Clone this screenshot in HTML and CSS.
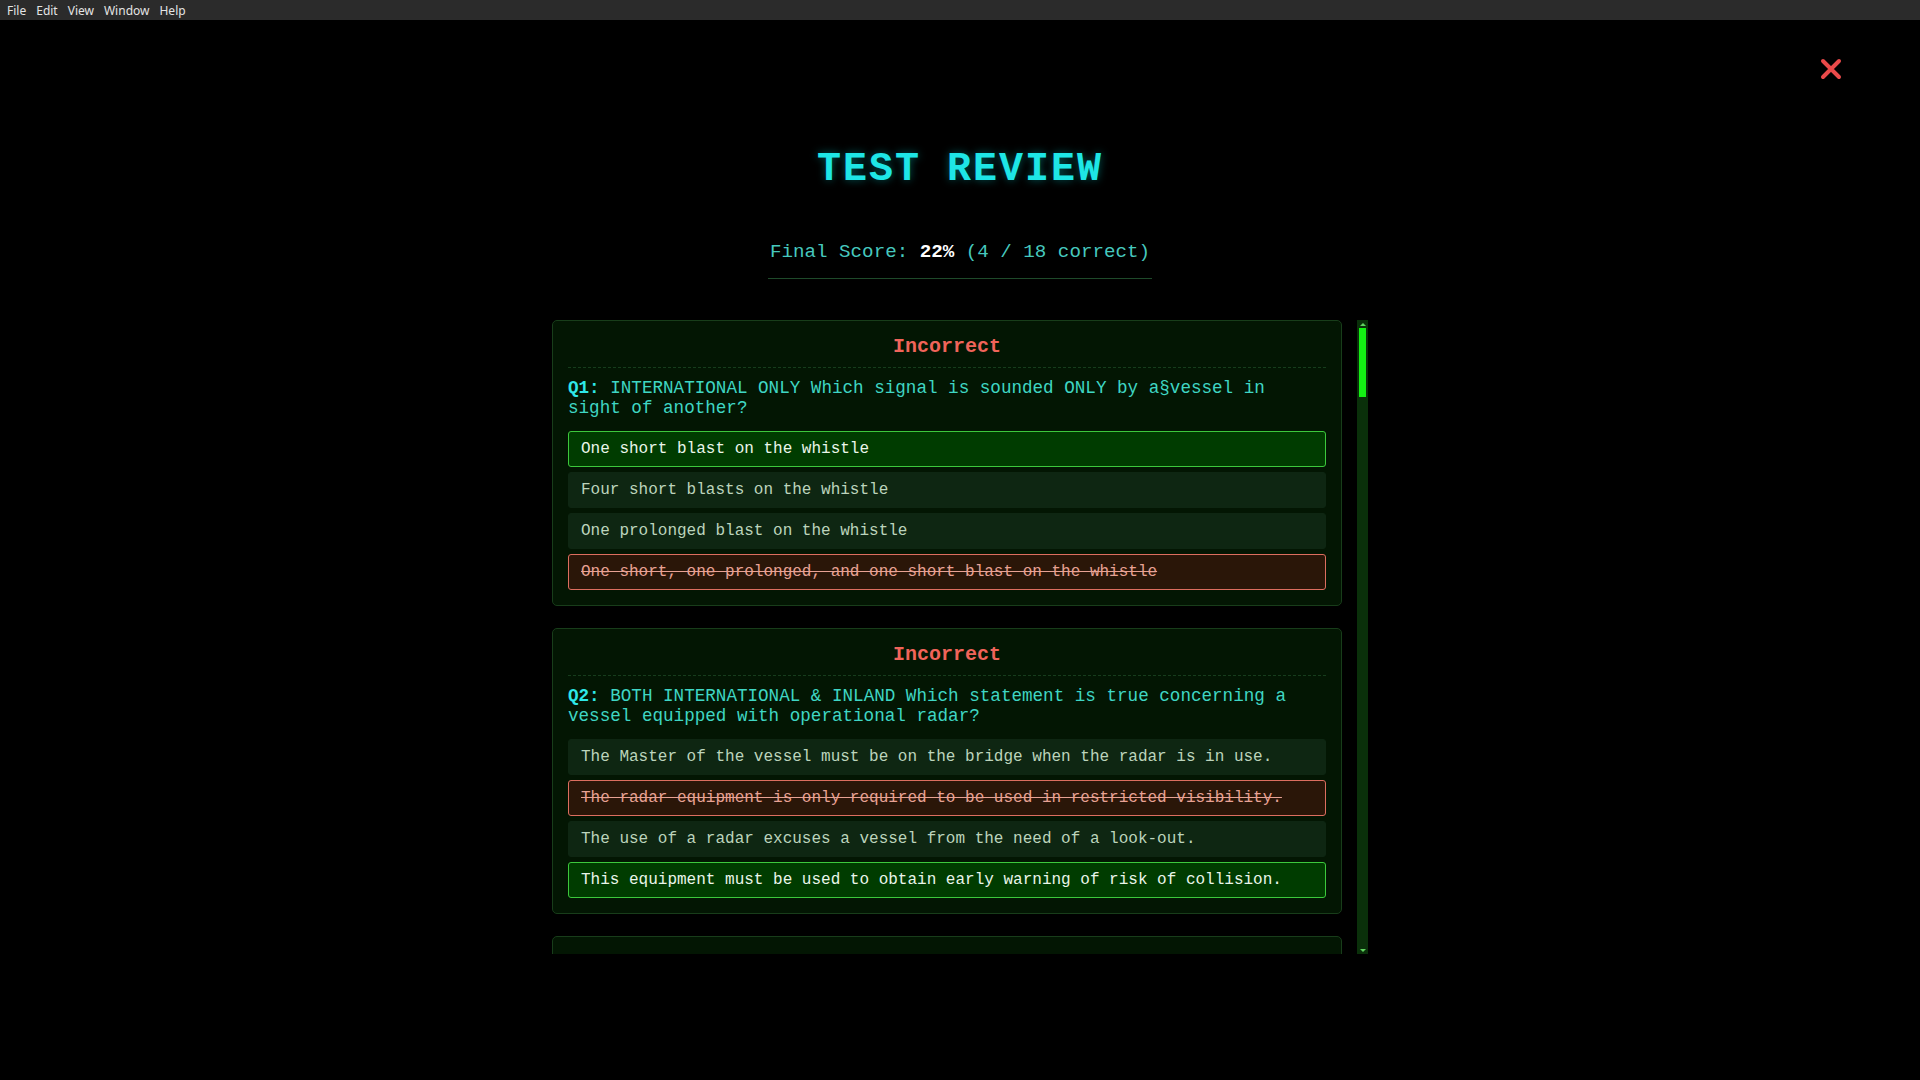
FILE: index.html
```html
<!DOCTYPE html>
<html lang="en">
<head>
    <meta charset="UTF-8">
    <title>Test Review</title>
    <link rel="stylesheet" href="styles.css">
</head>
<body>
<div class="menubar">
    <span>File</span>
    <span>Edit</span>
    <span>View</span>
    <span>Window</span>
    <span>Help</span>
</div>
<div class="review">
    <button class="close" title="Close">
        <svg width="22" height="22" viewBox="0 0 22 22"><path d="M3 3 L19 19 M19 3 L3 19" stroke="#ea4a4a" stroke-width="4" stroke-linecap="round"/></svg>
    </button>
    <h1>TEST REVIEW</h1>
    <div class="score">Final Score: <b>22%</b> (4 / 18 correct)</div>
    <div class="scroll-wrap">
    <div class="list">
        <div class="card">
            <div class="status bad">Incorrect</div>
            <p class="question"><b>Q1:</b> INTERNATIONAL ONLY Which signal is sounded ONLY by a&sect;vessel in sight of another?</p>
            <div class="option right">One short blast on the whistle</div>
            <div class="option">Four short blasts on the whistle</div>
            <div class="option">One prolonged blast on the whistle</div>
            <div class="option wrong">One short, one prolonged, and one short blast on the whistle</div>
        </div>
        <div class="card">
            <div class="status bad">Incorrect</div>
            <p class="question"><b>Q2:</b> BOTH INTERNATIONAL &amp; INLAND Which statement is true concerning a vessel equipped with operational radar?</p>
            <div class="option">The Master of the vessel must be on the bridge when the radar is in use.</div>
            <div class="option wrong">The radar equipment is only required to be used in restricted visibility.</div>
            <div class="option">The use of a radar excuses a vessel from the need of a look-out.</div>
            <div class="option right">This equipment must be used to obtain early warning of risk of collision.</div>
        </div>
        <div class="card">
            <div class="status bad">Incorrect</div>
            <p class="question"><b>Q3:</b> INLAND ONLY A power-driven vessel proceeding downbound with a following current on the Western Rivers shall ___.</p>
            <div class="option">propose the manner of passage</div>
            <div class="option">initiate the maneuvering signals</div>
            <div class="option wrong">have the right-of-way over an upbound vessel</div>
            <div class="option right">All of the above</div>
        </div>
        <div class="card">
            <div class="status bad">Incorrect</div>
            <p class="question"><b>Q4:</b> BOTH INTERNATIONAL &amp; INLAND Which vessel must show forward and after masthead lights when underway?</p>
            <div class="option wrong">A 150-meter vessel engaged in fishing</div>
            <div class="option">A 45-meter vessel trawling</div>
            <div class="option right">A 75-meter power-driven vessel</div>
            <div class="option">A 100-meter sailing vessel</div>
        </div>
        <div class="card">
            <div class="status good">Correct</div>
            <p class="question"><b>Q5:</b> BOTH INTERNATIONAL &amp; INLAND The term "restricted visibility" includes visibility reduced by ___.</p>
            <div class="option">heavy rainstorms</div>
            <div class="option">sandstorms</div>
            <div class="option">smoke from a vessel's stack</div>
            <div class="option right">All of the above</div>
        </div>
        <div class="card">
            <div class="status bad">Incorrect</div>
            <p class="question"><b>Q6:</b> BOTH INTERNATIONAL &amp; INLAND A vessel not under command shall display ___.</p>
            <div class="option right">two all-round red lights in a vertical line</div>
            <div class="option wrong">three all-round red lights in a vertical line</div>
            <div class="option">one all-round red light</div>
            <div class="option">a red light over a white light</div>
        </div>
        <div class="card">
            <div class="status bad">Incorrect</div>
            <p class="question"><b>Q7:</b> INTERNATIONAL ONLY A vessel constrained by her draft may display ___.</p>
            <div class="option right">three all-round red lights in a vertical line</div>
            <div class="option">two all-round red lights in a vertical line</div>
            <div class="option">a black ball</div>
            <div class="option wrong">a diamond shape</div>
        </div>
        <div class="card">
            <div class="status bad">Incorrect</div>
            <p class="question"><b>Q8:</b> BOTH INTERNATIONAL &amp; INLAND In a crossing situation, the vessel which has the other on her own starboard side shall ___.</p>
            <div class="option right">keep out of the way</div>
            <div class="option wrong">maintain course and speed</div>
            <div class="option">sound the danger signal</div>
            <div class="option">slow to bare steerageway</div>
        </div>
        <div class="card">
            <div class="status good">Correct</div>
            <p class="question"><b>Q9:</b> BOTH INTERNATIONAL &amp; INLAND A sailing vessel with the wind on the port side shall keep out of the way of ___.</p>
            <div class="option right">a sailing vessel with the wind on the starboard side</div>
            <div class="option">a power-driven vessel underway</div>
            <div class="option">a vessel overtaking her</div>
            <div class="option">a seaplane on the water</div>
        </div>
        <div class="card">
            <div class="status bad">Incorrect</div>
            <p class="question"><b>Q10:</b> INLAND ONLY Which light is displayed by a vessel pushing ahead?</p>
            <div class="option">Two masthead lights in a vertical line</div>
            <div class="option right">A special flashing yellow light at the bow</div>
            <div class="option wrong">Two towing lights</div>
            <div class="option">A red light over a white light</div>
        </div>
        <div class="card">
            <div class="status bad">Incorrect</div>
            <p class="question"><b>Q11:</b> BOTH INTERNATIONAL &amp; INLAND A stern light shows from dead astern to how many degrees on each side?</p>
            <div class="option">22.5 degrees</div>
            <div class="option right">67.5 degrees</div>
            <div class="option wrong">112.5 degrees</div>
            <div class="option">135 degrees</div>
        </div>
        <div class="card">
            <div class="status bad">Incorrect</div>
            <p class="question"><b>Q12:</b> BOTH INTERNATIONAL &amp; INLAND A vessel at anchor shall display between sunset and sunrise ___.</p>
            <div class="option right">an all-round white light where it can best be seen</div>
            <div class="option">a red light over a white light</div>
            <div class="option">two all-round red lights</div>
            <div class="option wrong">sidelights and a stern light</div>
        </div>
        <div class="card">
            <div class="status good">Correct</div>
            <p class="question"><b>Q13:</b> BOTH INTERNATIONAL &amp; INLAND Which signal indicates doubt as to the intentions of another vessel?</p>
            <div class="option right">At least five short and rapid blasts</div>
            <div class="option">One prolonged blast</div>
            <div class="option">Two short blasts</div>
            <div class="option">Three short blasts</div>
        </div>
        <div class="card">
            <div class="status bad">Incorrect</div>
            <p class="question"><b>Q14:</b> BOTH INTERNATIONAL &amp; INLAND A power-driven vessel underway in fog but stopped shall sound ___.</p>
            <div class="option right">two prolonged blasts at intervals of not more than 2 minutes</div>
            <div class="option wrong">one prolonged blast at intervals of not more than 2 minutes</div>
            <div class="option">one prolonged and two short blasts</div>
            <div class="option">a rapid ringing of the bell for 5 seconds</div>
        </div>
        <div class="card">
            <div class="status bad">Incorrect</div>
            <p class="question"><b>Q15:</b> INTERNATIONAL ONLY A vessel engaged in trawling shall show ___.</p>
            <div class="option right">two all-round lights, green over white</div>
            <div class="option wrong">two all-round lights, red over white</div>
            <div class="option">two all-round lights, white over red</div>
            <div class="option">three all-round lights, red-white-red</div>
        </div>
        <div class="card">
            <div class="status good">Correct</div>
            <p class="question"><b>Q16:</b> BOTH INTERNATIONAL &amp; INLAND Which vessel is "underway" within the meaning of the Rules?</p>
            <div class="option right">A vessel drifting with the engines stopped</div>
            <div class="option">A vessel made fast to the shore</div>
            <div class="option">A vessel at anchor</div>
            <div class="option">A vessel aground</div>
        </div>
        <div class="card">
            <div class="status bad">Incorrect</div>
            <p class="question"><b>Q17:</b> BOTH INTERNATIONAL &amp; INLAND Sidelights on a vessel of 50 meters must be visible at a minimum range of ___.</p>
            <div class="option">1 mile</div>
            <div class="option right">2 miles</div>
            <div class="option wrong">3 miles</div>
            <div class="option">6 miles</div>
        </div>
        <div class="card">
            <div class="status bad">Incorrect</div>
            <p class="question"><b>Q18:</b> BOTH INTERNATIONAL &amp; INLAND A vessel engaged in mine clearance operations shall show ___.</p>
            <div class="option right">three all-round green lights</div>
            <div class="option wrong">two all-round red lights</div>
            <div class="option">a flashing yellow light</div>
            <div class="option">one all-round green light</div>
        </div>
    </div>
    <div class="scrollbar">
        <div class="arrow up"></div>
        <div class="track"><div class="thumb"></div></div>
        <div class="arrow down"></div>
    </div>
    </div>
</div>
</body>
</html>
```

FILE: styles.css
```css
*{
    margin: 0;
    padding: 0;
    box-sizing: border-box;
}
html,body{
    width: 100%;
    height: 100%;
}
body{
    background: #000;
    font-family: "Liberation Mono", "Courier New", monospace;
    overflow: hidden;
}
.menubar{
    height: 20px;
    background: #2b2b2b;
    display: flex;
    align-items: center;
    padding-left: 2px;
    font-family: "Noto Sans", "Liberation Sans", sans-serif;
    font-size: 12px;
    color: #e4e4e4;
}
.menubar span{
    padding: 0 5px;
}
.review{
    position: relative;
    text-align: center;
    padding-top: 126px;
}
.close{
    position: absolute;
    top: 38px;
    right: 78px;
    width: 22px;
    height: 22px;
    background: none;
    border: none;
    cursor: pointer;
}
.close svg{
    display: block;
}
h1{
    font-size: 40px;
    line-height: 48px;
    letter-spacing: 2px;
    font-weight: bold;
    color: #1ee6e6;
    text-shadow: 0 0 8px rgba(0,255,255,0.35);
}
.score{
    display: inline-block;
    margin-top: 46px;
    padding: 0 2px 14px;
    border-bottom: 1px solid #1e4a2a;
    font-size: 19.2px;
    line-height: 24px;
    color: #46c8be;
}
.score b{
    color: #fff;
}
.scroll-wrap{
    width: 816px;
    height: 634px;
    margin: 41px auto 0;
    display: flex;
    justify-content: space-between;
    text-align: left;
}
.list{
    width: 790px;
    height: 100%;
    overflow: hidden;
}
.scrollbar{
    width: 11px;
    height: 100%;
    display: flex;
    flex-direction: column;
    background: #0a300a;
}
.arrow{
    height: 8px;
    display: flex;
    justify-content: center;
    align-items: center;
}
.arrow::after{
    content: "";
    border-left: 3px solid transparent;
    border-right: 3px solid transparent;
}
.up::after{
    border-bottom: 3px solid #5fd35f;
}
.down::after{
    border-top: 3px solid #5fd35f;
}
.track{
    flex: 1;
    padding: 0 2px;
}
.thumb{
    height: 69px;
    background: #14f014;
}
.card{
    background: #031603;
    border: 1px solid #183d1a;
    border-radius: 5px;
    padding: 15px 15px 15px;
    margin-bottom: 22px;
}
.status{
    text-align: center;
    font-size: 20px;
    line-height: 22px;
    font-weight: bold;
    padding-bottom: 9px;
    border-bottom: 1px dashed #163d1c;
}
.bad{
    color: #f0645a;
}
.good{
    color: #3ee05a;
}
.question{
    margin: 10px 0 13px;
    font-size: 17.6px;
    line-height: 20px;
    color: #3fd6c4;
}
.question b{
    color: #2ee8e8;
}
.option{
    height: 36px;
    margin-bottom: 5px;
    padding: 8px 12px;
    font-size: 16px;
    line-height: 18px;
    white-space: nowrap;
    background: #0e2612;
    border: 1px solid #0e2612;
    border-radius: 3px;
    color: #bcd4bc;
}
.option:last-child{
    margin-bottom: 0;
}
.right{
    background: #003c00;
    border-color: #3cc83c;
    color: #eaf6ea;
}
.wrong{
    background: #2a1608;
    border-color: #dc6e5f;
    color: #e8a294;
    text-decoration: line-through;
}
```
